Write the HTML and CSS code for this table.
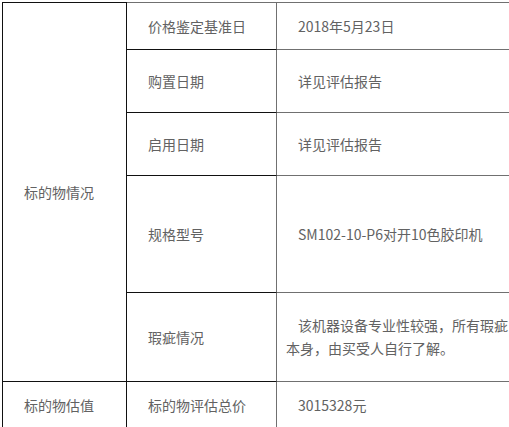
FILE: index.html
```html
<!DOCTYPE html>
<html lang="zh">
<head>
<meta charset="utf-8">
<title>标的物情况</title>
<link rel="stylesheet" href="styles.css">
</head>
<body>
<table class="info">
  <colgroup>
    <col class="c1">
    <col class="c2">
    <col class="c3">
  </colgroup>
  <tr class="r1">
    <td class="group first" rowspan="5">标的物情况</td>
    <td class="label first">价格鉴定基准日</td>
    <td class="value first">2018年5月23日</td>
  </tr>
  <tr class="r2">
    <td class="label">购置日期</td>
    <td class="value">详见评估报告</td>
  </tr>
  <tr class="r3">
    <td class="label">启用日期</td>
    <td class="value">详见评估报告</td>
  </tr>
  <tr class="r4">
    <td class="label">规格型号</td>
    <td class="value">SM102-10-P6对开10色胶印机</td>
  </tr>
  <tr class="r5">
    <td class="label">瑕疵情况</td>
    <td class="value">该机器设备专业性较强，所有瑕疵<br>本身，由买受人自行了解。</td>
  </tr>
  <tr class="r6">
    <td class="group">标的物估值</td>
    <td class="label">标的物评估总价</td>
    <td class="value">3015328元</td>
  </tr>
</table>
</body>
</html>
```

FILE: styles.css
```css
html, body {
  margin: 0;
  padding: 0;
  overflow: hidden;
  background: #ffffff;
}

.info {
  margin: 2px 0 0 2px;
  border-collapse: separate;
  border-spacing: 0;
  table-layout: fixed;
  width: 640px;
  font-family: "Noto Sans CJK SC", "Noto Sans", sans-serif;
  font-size: 14px;
  line-height: 23px;
  color: #626262;
}

.c1 { width: 125px; }
.c2 { width: 150px; }
.c3 { width: 365px; }

.info td {
  padding: 0;
  vertical-align: middle;
  white-space: nowrap;
}

.group {
  border-left: 1px solid #111;
  border-right: 1px solid #111;
  border-bottom: 1px solid #111;
  padding-left: 21px !important;
}

.label {
  border-right: 1px solid #707070;
  border-bottom: 1px solid #111;
  padding-left: 21px !important;
}

.value {
  border-right: 1px solid #707070;
  border-bottom: 1px solid #707070;
  padding-left: 9px !important;
  text-indent: 12px;
}

.group.first { border-top: 1px solid #111; }
.label.first,
.value.first { border-top: 1px solid #707070; }

.r1 { height: 48px; }
.r2 { height: 63px; }
.r3 { height: 63px; }
.r4 { height: 117px; }
.r5 { height: 89px; }
.r6 { height: 48px; }
```
